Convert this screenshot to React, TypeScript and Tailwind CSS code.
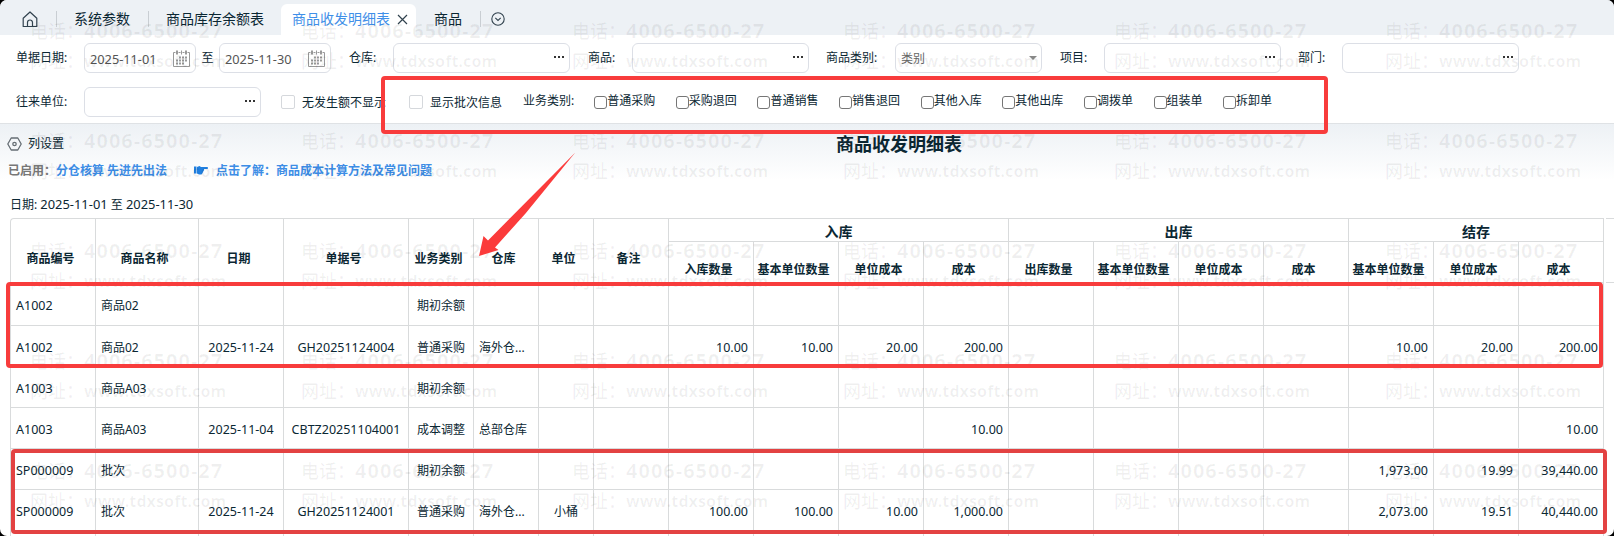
import React from "react";

const columns = [
  { title: "商品编号", width: 85, align: "text-left" },
  { title: "商品名称", width: 103, align: "text-left" },
  { title: "日期", width: 85, align: "text-center" },
  { title: "单据号", width: 125, align: "text-center" },
  { title: "业务类别", width: 65, align: "text-center" },
  { title: "仓库", width: 65, align: "text-left" },
  { title: "单位", width: 55, align: "text-center" },
  { title: "备注", width: 75, align: "text-left" },
];

const groups = [
  { title: "入库", children: ["入库数量", "基本单位数量", "单位成本", "成本"] },
  { title: "出库", children: ["出库数量", "基本单位数量", "单位成本", "成本"] },
  { title: "结存", children: ["基本单位数量", "单位成本", "成本"] },
];

const rows = [
  ["A1002", "商品02", "", "", "期初余额", "", "", "", "", "", "", "", "", "", "", "", "", "", ""],
  ["A1002", "商品02", "2025-11-24", "GH20251124004", "普通采购", "海外仓...", "", "", "10.00", "10.00", "20.00", "200.00", "", "", "", "", "10.00", "20.00", "200.00"],
  ["A1003", "商品A03", "", "", "期初余额", "", "", "", "", "", "", "", "", "", "", "", "", "", ""],
  ["A1003", "商品A03", "2025-11-04", "CBTZ20251104001", "成本调整", "总部仓库", "", "", "", "", "", "10.00", "", "", "", "", "", "", "10.00"],
  ["SP000009", "批次", "", "", "期初余额", "", "", "", "", "", "", "", "", "", "", "", "1,973.00", "19.99", "39,440.00"],
  ["SP000009", "批次", "2025-11-24", "GH20251124001", "普通采购", "海外仓...", "小桶", "", "100.00", "100.00", "10.00", "1,000.00", "", "", "", "", "2,073.00", "19.51", "40,440.00"],
  ["", "", "", "", "", "", "", "", "", "", "", "", "", "", "", "", "", "", ""],
];

const businessTypes = ["普通采购", "采购退回", "普通销售", "销售退回", "其他入库", "其他出库", "调拨单", "组装单", "拆卸单"];

const CalendarIcon = () => (
  <svg width="17" height="17" viewBox="0 0 17 17" fill="none" stroke="#999" strokeWidth="1">
    <path d="M2.5 2.5h-2v14h16v-14h-2M5.5 2.5h2M9.5 2.5h2" />
    <path d="M3.5.5v4M4.5.5v4M8.5.5v4M12.5.5v4M13.5.5v4" />
    <path d="M6 7.5h8M3 10.5h11M3 13.5h8" strokeWidth="2" strokeDasharray="2 1" />
  </svg>
);

const DateInput = ({ value }: { value: string }) => (
  <div className="flex h-[30px] w-[112px] items-center justify-between rounded-md border border-[#dcdfe6] bg-white pt-px pr-[5px] pl-[5px] text-[12.75px] text-[#555]">
    <span className="pt-px">{value}</span>
    <CalendarIcon />
  </div>
);

const PickerInput = () => (
  <div className="flex h-[30px] w-[177px] items-center justify-end gap-[2px] rounded-md border border-[#dcdfe6] bg-white pr-[5px] pb-[2px]">
    <i className="size-[2px] bg-[#333]"></i>
    <i className="size-[2px] bg-[#333]"></i>
    <i className="size-[2px] bg-[#333]"></i>
  </div>
);

const Label = ({ text }: { text: string }) => <span className="pb-px whitespace-nowrap">{text}</span>;

const TabBar = () => (
  <div className="flex h-[35px] bg-[#edf1f5] text-sm">
    <div className="flex h-[38px] w-full items-center">
      <svg className="ml-[22px]" width="16" height="17" viewBox="0 0 16 17" fill="none" stroke="#31424e" strokeWidth="1.2">
        <path d="M1.2 7.2 8 1l6.8 6.2v8.3H1.2z" strokeLinejoin="round" />
        <path d="M5.5 15.5v-4a2.5 2.5 0 0 1 5 0v4" />
      </svg>
      <i className="ml-[18px] h-4 w-px bg-[#c9ced3]"></i>
      <span className="ml-[17px]">系统参数</span>
      <i className="ml-[18px] h-4 w-px bg-[#c9ced3]"></i>
      <span className="ml-[17px]">商品库存余额表</span>
      <div className="mt-1 ml-[17px] flex h-[34px] w-[135px] items-center rounded-t-md bg-white pb-1 pl-[11px] text-[#3f8fe8]">
        商品收发明细表
        <svg className="ml-[7px]" width="11" height="11" viewBox="0 0 11 11" stroke="#31424e" strokeWidth="1.2">
          <path d="m1 1 9 9M10 1l-9 9" />
        </svg>
      </div>
      <span className="ml-[18px]">商品</span>
      <i className="ml-[18px] h-4 w-px bg-[#c9ced3]"></i>
      <svg className="ml-[10px]" width="14" height="14" viewBox="0 0 14 14" fill="none" stroke="#31424e" strokeWidth="1.1">
        <circle cx="7" cy="7" r="6.2" />
        <path d="m4.3 5.8 2.7 2.6 2.7-2.6" />
      </svg>
    </div>
  </div>
);

const Filters = () => (
  <div className="h-[89px] border-b border-[#dfe2e5] bg-white pt-2 pl-4">
    <div className="flex h-[30px] items-center">
      <div className="w-[68px] shrink-0"><Label text="单据日期:" /></div>
      <DateInput value="2025-11-01" />
      <div className="w-[23px] text-center"><Label text="至" /></div>
      <DateInput value="2025-11-30" />
      <div className="w-[62px] pl-[18px]"><Label text="仓库:" /></div>
      <PickerInput />
      <div className="w-[62px] pl-[18px]"><Label text="商品:" /></div>
      <PickerInput />
      <div className="w-[86px] pl-[17px]"><Label text="商品类别:" /></div>
      <div className="flex h-[30px] w-[147px] items-center justify-between rounded-md border border-[#dcdfe6] bg-white pr-1 pl-[5px] text-[#666]">
        <span className="pt-px">类别</span>
        <i className="border-x-4 border-t-4 border-x-transparent border-t-[#888]"></i>
      </div>
      <div className="w-[62px] pl-[18px]"><Label text="项目:" /></div>
      <PickerInput />
      <div className="w-[61px] pl-[17px]"><Label text="部门:" /></div>
      <PickerInput />
    </div>

    <div className="mt-[14px] flex h-[30px] items-center">
      <div className="w-[68px] shrink-0"><Label text="往来单位:" /></div>
      <PickerInput />
      <i className="ml-5 size-[14px] rounded-xs border border-[#d5d8dc]"></i>
      <span className="ml-[7px] w-[86px] pt-[2px]">无发生额不显示</span>
      <i className="ml-[21px] size-[14px] rounded-xs border border-[#d5d8dc]"></i>
      <span className="ml-[7px] pt-[2px]">显示批次信息</span>
      <div className="mr-5 ml-[21px] pb-[2px]"><Label text="业务类别:" /></div>
      {businessTypes.map((type) => (
        <label key={type} className="mr-[19.6px] flex items-center whitespace-nowrap">
          <i className="size-[13px] rounded-[3px] border border-[#767676] bg-white"></i>
          <span className="mr-px pb-[2px]">{type}</span>
        </label>
      ))}
    </div>
  </div>
);

const Toolbar = () => (
  <div className="h-[94px] bg-linear-to-b from-[#edf1f5] to-white to-60%">
    <div className="flex h-[39px] items-center">
      <div className="flex w-[836px] items-center gap-[6px] pl-[7px]">
        <svg width="15" height="14" viewBox="0 0 15 14" fill="none" stroke="#666e74" strokeWidth="1.3">
          <path d="M4.2 1h6.6L14.2 7l-3.4 6H4.2L.8 7z" strokeLinejoin="round" />
          <circle cx="7.5" cy="7" r="1.7" />
        </svg>
        <span>列设置</span>
      </div>
      <h1 className="text-lg font-bold">商品收发明细表</h1>
    </div>
    <div className="flex h-[15px] items-center pl-2 font-bold text-[#3d8de6]">
      <span className="w-12 whitespace-nowrap text-[#777]">已启用：</span>
      <span className="w-[138px]">分仓核算 先进先出法</span>
      <svg className="mr-2" width="14" height="9" viewBox="0 0 14 9" fill="#2180e0">
        <path d="M0 .5h2.5v7H0zM3 1l2.5-1L7 1h6.2c1.1 0 1.1 2 0 2H10v1.2l-.8 1.3-.6 1.4L7.5 8.6H5L3 7.5z" />
      </svg>
      <span>点击了解：商品成本计算方法及常见问题</span>
    </div>
    <p className="pt-4 pl-[10px] leading-5">
      日期: <span className="text-[12.9px]">2025-11-01</span> 至 <span className="text-[12.9px]">2025-11-30</span>
    </p>
  </div>
);

const DetailTable = () => (
  <div className="flex pl-[10px]">
    <table className="w-[1594px] shrink-0 table-fixed border-separate border-spacing-0 rounded-tl border-t border-l border-[#d9dbdc]">
      <colgroup>
        {columns.map((col) => (
          <col key={col.title} style={{ width: col.width }} />
        ))}
        {groups.map((group) =>
          group.children.map((name) => <col key={group.title + name} className="w-[85px]" />)
        )}
      </colgroup>
      <thead>
        <tr className="h-[23px]">
          {columns.map((col) => (
            <th key={col.title} rowSpan={2} className="border-r border-b border-[#d9dbdc] pt-4 pr-[5px]">
              {col.title}
            </th>
          ))}
          {groups.map((group) => (
            <th key={group.title} colSpan={group.children.length} className="border-r border-b border-[#d9dbdc] pt-[3px] text-sm leading-[19px]">
              {group.title}
            </th>
          ))}
        </tr>
        <tr className="h-[41px]">
          {groups.map((group) =>
            group.children.map((name) => (
              <th key={group.title + name} className="border-r border-b border-[#d9dbdc] pt-[15px] pr-[5px] whitespace-nowrap">
                {name}
              </th>
            ))
          )}
        </tr>
      </thead>
      <tbody>
        {rows.map((row, index) => (
          <tr key={index} className="h-[41px] first:h-[43px]">
            {row.map((value, i) => (
              <td
                key={i}
                className={`border-r border-b border-[#d9dbdc] px-[5px] pt-1 whitespace-nowrap ${/[一-龥]/.test(value) ? "" : "text-[12.5px]"} ${i < columns.length ? columns[i].align : "text-right"}`}
              >
                {value}
              </td>
            ))}
          </tr>
        ))}
      </tbody>
    </table>
    <div className="ml-[2px] h-[65px] flex-1 border-y border-[#d9dbdc]"></div>
  </div>
);

const Watermark = () => (
  <div className="pointer-events-none absolute top-[18px] left-[30px] grid grid-cols-[repeat(6,271px)] auto-rows-[110px] text-black/6">
    {Array.from({ length: 30 }, (_, i) => (
      <div key={i} className="text-lg leading-[26px] font-bold whitespace-nowrap">
        <p className="flex">
          <span className="w-[54px] font-medium">电话：</span>
          <span className="text-[20px] tracking-[1px]">4006-6500-27</span>
        </p>
        <p className="mt-1 flex">
          <span className="w-[54px] font-medium">网址：</span>
          <span className="text-base leading-[26px] tracking-[0.1px]">www.tdxsoft.com</span>
        </p>
      </div>
    ))}
  </div>
);

// Red boxes and arrow that point out the new options
const Annotations = () => (
  <div className="pointer-events-none absolute inset-0">
    <div className="absolute top-[76px] left-[381px] h-[58px] w-[947px] rounded border-4 border-[#f83c3c]"></div>
    <div className="absolute top-[282px] left-[6px] h-[86px] w-[1597px] rounded border-4 border-[#f83c3c]"></div>
    <div className="absolute top-[449px] left-[11px] h-[85px] w-[1596px] rounded border-4 border-[#e34242]"></div>
    <svg className="absolute top-[152px] left-[478px]" width="98" height="106" viewBox="478 152 98 106" fill="#fb3b3b">
      <path d="M479 256 483.5 236 488 240.5 575.3 152.5 525.5 213.5 495 247.5 498.5 250z" />
    </svg>
  </div>
);

const App = () => {
  return (
    <div className="h-[536px] w-[1614px] overflow-hidden bg-black">
      <div className="relative h-full overflow-hidden rounded-[7px] bg-white font-['Noto_Sans','Noto_Sans_CJK_SC',sans-serif] text-xs text-[#0b2733]">
        <TabBar />
        <Filters />
        <Toolbar />
        <DetailTable />
        <Watermark />
        <Annotations />
      </div>
    </div>
  );
};

export default App;
